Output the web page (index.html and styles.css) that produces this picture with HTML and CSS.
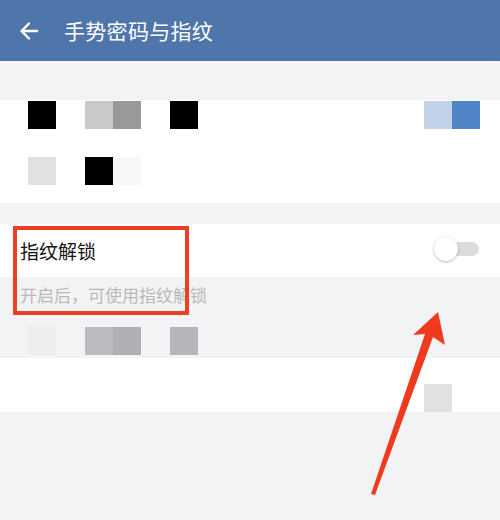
FILE: index.html
```html
<!DOCTYPE html>
<html lang="zh-CN">
<head>
    <meta charset="UTF-8">
    <meta name="viewport" content="width=device-width, initial-scale=1.0">
    <title>手势密码与指纹</title>
    <link rel="stylesheet" href="styles.css">
</head>
<body>
    <div id="app">
        <div class="topbar">
            <svg class="back" width="20" height="20" viewBox="0 0 20 20">
                <path d="M18 10H3M10 2.5L2.5 10L10 17.5" fill="none" stroke="#fff" stroke-width="2.4" stroke-linecap="round" stroke-linejoin="round"/>
            </svg>
            <span class="title">手势密码与指纹</span>
        </div>

        <div class="band band-top"></div>

        <!-- blurred gesture section -->
        <div class="panel panel-gesture">
            <div class="mosaic-row row-a">
                <div class="group"><span class="tile c-black"></span></div>
                <div class="group"><span class="tile c-g1"></span><span class="tile c-g2"></span></div>
                <div class="group"><span class="tile c-black"></span></div>
                <div class="group push-right"><span class="tile c-b1"></span><span class="tile c-b2"></span></div>
            </div>
            <div class="mosaic-row row-b">
                <div class="group"><span class="tile c-g3"></span></div>
                <div class="group"><span class="tile c-black"></span><span class="tile c-g4"></span></div>
            </div>
        </div>

        <div class="band band-mid"></div>

        <div class="panel setting-row">
            <span class="setting-label">指纹解锁</span>
            <span class="switch"><span class="knob"></span></span>
        </div>
        <div class="hint">开启后，可使用指纹解锁</div>

        <div class="mosaic-row row-c">
            <div class="group"><span class="tile c-g5"></span></div>
            <div class="group"><span class="tile c-g6"></span><span class="tile c-g7"></span></div>
            <div class="group"><span class="tile c-g8"></span></div>
        </div>

        <div class="panel panel-bottom">
            <div class="group push-right"><span class="tile c-g3"></span></div>
        </div>

        <!-- annotation overlay -->
        <div class="mark-box"></div>
        <svg class="mark-arrow" width="500" height="520" viewBox="0 0 500 520">
            <path d="M371 494 L375 495 L433 337 L445 345 L438 312 L413 335 L425 334 Z" fill="#f03a1e"/>
        </svg>
    </div>
</body>
</html>
```

FILE: styles.css
```css
html, body {
    margin: 0;
    padding: 0;
}

body {
    background-color: #f2f3f5;
    font-family: "Noto Sans CJK SC", "Noto Sans", sans-serif;
}

#app {
    position: relative;
    width: 500px;
    height: 520px;
    overflow: hidden;
}

.topbar {
    height: 61px;
    background-color: #4f76aa;
    display: flex;
    align-items: center;
    padding-left: 19px;
    box-sizing: border-box;
}

.back {
    margin-right: 25px;
}

.title {
    color: #fff;
    font-size: 21px;
    line-height: 1;
    margin-top: -1px;
    letter-spacing: 0.3px;
}

.band-top {
    height: 39px;
}

.band-mid {
    height: 21px;
}

.panel {
    background-color: #fff;
}

.panel-gesture {
    height: 103px;
    padding-top: 1px;
    box-sizing: border-box;
}

.mosaic-row {
    display: flex;
    gap: 29px;
    padding: 0 20px 0 28px;
}

.row-b {
    margin-top: 28px;
}

.row-c {
    margin-top: 6px;
    height: 28px;
}

.group {
    display: flex;
}

.push-right {
    margin-left: auto;
}

.tile {
    display: block;
    width: 28px;
    height: 28px;
}

.c-black { background-color: #000; }
.c-g1 { background-color: #c9c9c9; }
.c-g2 { background-color: #999; }
.c-g3 { background-color: #e1e1e1; }
.c-g4 { background-color: #f8f8f8; }
.c-g5 { background-color: #eceef0; }
.c-g6 { background-color: #b9bbbf; }
.c-g7 { background-color: #aeb0b4; }
.c-g8 { background-color: #b4b6ba; }
.c-b1 { background-color: #c1d1e8; }
.c-b2 { background-color: #5085c8; }

.setting-row {
    height: 53px;
    display: flex;
    align-items: center;
    justify-content: space-between;
    padding: 0 21px 0 20px;
}

.setting-label {
    font-size: 19px;
    color: #151515;
    margin-top: -1px;
}

.switch {
    position: relative;
    width: 42px;
    height: 14px;
    border-radius: 7px;
    background-color: #dcdcdc;
    margin-top: -4px;
}

.knob {
    position: absolute;
    left: -3px;
    top: -5px;
    width: 24px;
    height: 24px;
    border-radius: 50%;
    background-color: #fff;
    box-shadow: 0 1px 3px rgba(0, 0, 0, 0.28);
}

.hint {
    height: 44px;
    padding: 5px 0 0 20px;
    box-sizing: border-box;
    font-size: 17px;
    color: #b9b9b9;
}

.panel-bottom {
    margin-top: 3px;
    height: 54px;
    display: flex;
    align-items: flex-end;
    padding-right: 48px;
}

.mark-box {
    position: absolute;
    left: 13px;
    top: 226px;
    width: 168px;
    height: 81px;
    border: 4px solid #ee3f25;
}

.mark-arrow {
    position: absolute;
    left: 0;
    top: 0;
}
```
